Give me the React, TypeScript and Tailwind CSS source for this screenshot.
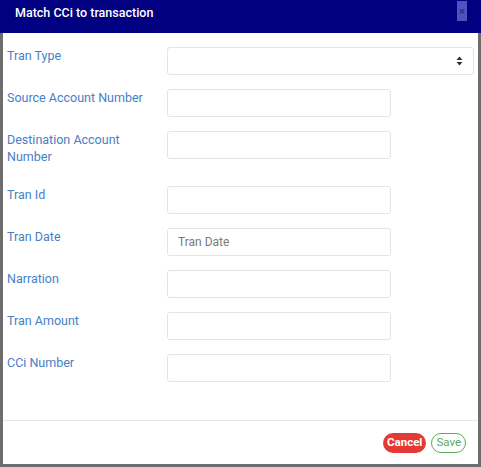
import React from 'react';

const fields: { label: string; kind: 'select' | 'input'; placeholder?: string }[] = [
  { label: 'Tran Type', kind: 'select' },
  { label: 'Source Account Number', kind: 'input' },
  { label: 'Destination Account Number', kind: 'input' },
  { label: 'Tran Id', kind: 'input' },
  { label: 'Tran Date', kind: 'input', placeholder: 'Tran Date' },
  { label: 'Narration', kind: 'input' },
  { label: 'Tran Amount', kind: 'input' },
  { label: 'CCi Number', kind: 'input' },
];

const App: React.FC = () => {
  return (
    <div className="w-[481px] h-[467px] flex flex-col bg-white font-['Roboto',sans-serif]">
      <header className="h-[33px] shrink-0 bg-[#000080] flex items-center justify-between pl-[15px] pr-[14px]">
        <h2 className="text-white text-[12.5px] font-medium -mt-[6px]">Match CCi to transaction</h2>
        <button className="w-[10px] h-[20px] -mt-[11px] bg-[#5050bf] flex items-center justify-center text-[#2d2d8c] text-[11px] leading-none font-bold">
          ×
        </button>
      </header>
      <div className="flex-1 flex flex-col border-x-[3px] border-b-[3px] border-[#6e6e6e]">
        <div className="flex-1 flex flex-col gap-[14px] pt-[14px] pl-[4px] pr-[4px]">
          {fields.map((f) => (
            <div key={f.label} className="flex items-start">
              <label className="w-[160px] shrink-0 pb-[7px] pr-[12px] text-[12.5px] leading-[17px] text-[#4680c6]">
                {f.label}
              </label>
              {f.kind === 'select' ? (
                <div className="flex-1 h-[28px] border border-[#e4e4e4] rounded-[3px] flex items-center justify-end pr-[10px]">
                  <svg width="7" height="10" viewBox="0 0 7 10">
                    <path d="M3.5 0.5 L6.5 4 H0.5 Z" fill="#333" />
                    <path d="M3.5 9.5 L6.5 6 H0.5 Z" fill="#333" />
                  </svg>
                </div>
              ) : (
                <input
                  placeholder={f.placeholder}
                  className="w-[224px] h-[28px] border border-[#e4e4e4] rounded-[3px] px-[10px] text-[12px] placeholder:text-[#7a7a7a] outline-none"
                />
              )}
            </div>
          ))}
        </div>
        <footer className="h-[44px] shrink-0 border-t border-[#e6e6e6] flex items-center justify-end gap-[5px] pr-[12px]">
          <button className="h-[20px] px-[4px] rounded-full bg-[#e53935] text-white text-[11.5px] font-bold">Cancel</button>
          <button className="h-[20px] px-[4px] rounded-full border border-[#5aaa5a] text-[#5aaa5a] text-[11.5px]">Save</button>
        </footer>
      </div>
    </div>
  );
};

export default App;
